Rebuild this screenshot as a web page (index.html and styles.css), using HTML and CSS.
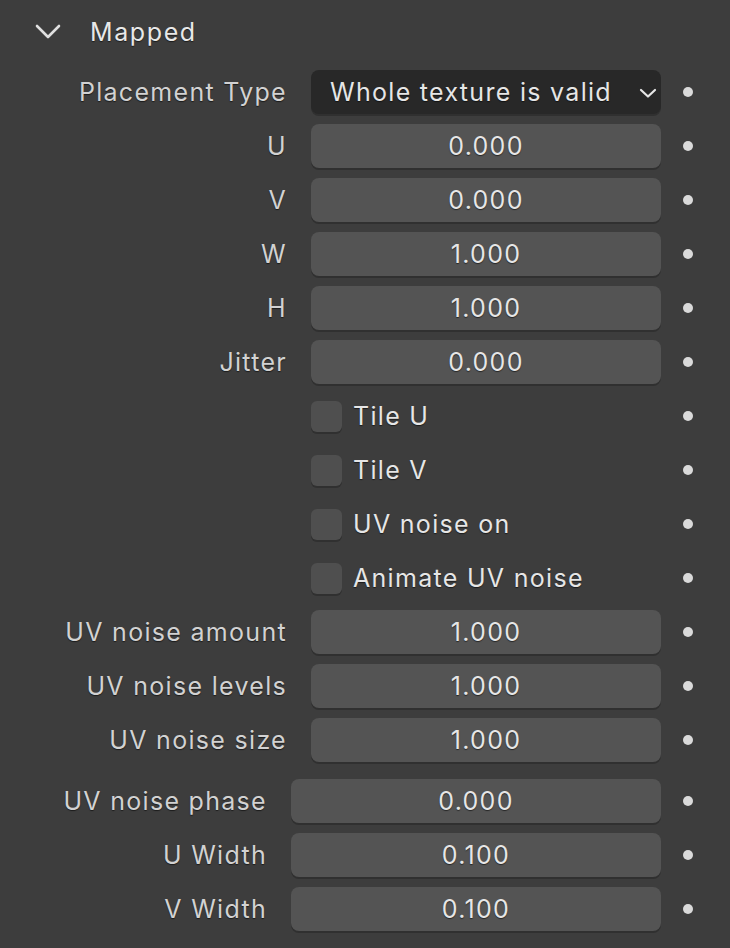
FILE: index.html
```html
<!DOCTYPE html>
<html>
<head>
<meta charset="utf-8">
<link rel="stylesheet" href="styles.css">
</head>
<body>
<div class="panel">
  <div class="header">
    <svg class="chev" width="26" height="16" viewBox="0 0 26 16"><path d="M2 2 L13 13 L24 2" fill="none" stroke="#e0e0e0" stroke-width="2.6" stroke-linecap="round" stroke-linejoin="round"/></svg>
    <span class="title">Mapped</span>
  </div>

  <div class="grid g1">
    <div class="label">Placement Type</div>
    <div class="field dropdown"><span>Whole texture is valid</span>
      <svg width="18" height="12" viewBox="0 0 18 12"><path d="M2 3 L9 9.5 L16 3" fill="none" stroke="#e6e6e6" stroke-width="2.2" stroke-linecap="round" stroke-linejoin="round"/></svg>
    </div>
    <div class="dot"></div>

    <div class="label">U</div><div class="field num">0.000</div><div class="dot"></div>
    <div class="label">V</div><div class="field num">0.000</div><div class="dot"></div>
    <div class="label">W</div><div class="field num">1.000</div><div class="dot"></div>
    <div class="label">H</div><div class="field num">1.000</div><div class="dot"></div>
    <div class="label">Jitter</div><div class="field num">0.000</div><div class="dot"></div>

    <div class="label"></div><div class="check"><span class="box"></span><span>Tile U</span></div><div class="dot"></div>
    <div class="label"></div><div class="check"><span class="box"></span><span>Tile V</span></div><div class="dot"></div>
    <div class="label"></div><div class="check"><span class="box"></span><span>UV noise on</span></div><div class="dot"></div>
    <div class="label"></div><div class="check"><span class="box"></span><span>Animate UV noise</span></div><div class="dot"></div>

    <div class="label">UV noise amount</div><div class="field num">1.000</div><div class="dot"></div>
    <div class="label">UV noise levels</div><div class="field num">1.000</div><div class="dot"></div>
    <div class="label">UV noise size</div><div class="field num">1.000</div><div class="dot"></div>
  </div>

  <div class="grid g2">
    <div class="label">UV noise phase</div><div class="field num">0.000</div><div class="dot"></div>
    <div class="label">U Width</div><div class="field num">0.100</div><div class="dot"></div>
    <div class="label">V Width</div><div class="field num">0.100</div><div class="dot"></div>
  </div>
</div>
</body>
</html>
```

FILE: styles.css
```css
html, body {
  margin: 0;
  padding: 0;
  background: #3d3d3d;
}
body {
  font-family: Inter, "Noto Sans", sans-serif;
  font-size: 25px;
  letter-spacing: 1.3px;
  color: #e6e6e6;
  width: 730px;
  height: 948px;
  overflow: hidden;
}
.panel {
  display: flex;
  flex-direction: column;
}
.header {
  height: 64px;
  display: flex;
  align-items: center;
  padding-left: 35px;
}
.chev {
  display: block;
  margin-right: 29px;
}
.title {
  font-size: 25px;
  letter-spacing: 1.6px;
  color: #e8e8e8;
  text-shadow: 0 1px 1px rgba(0,0,0,0.55);
}
.grid {
  display: grid;
  grid-auto-rows: 44px;
  row-gap: 10px;
  align-items: center;
}
.g1 {
  margin-top: 6px;
  grid-template-columns: 311px 350px 1fr;
}
.g2 {
  margin-top: 17px;
  grid-template-columns: 291px 370px 1fr;
}
.label {
  text-align: right;
  padding-right: 24px;
  color: #d2d2d2;
  text-shadow: 0 1px 1px rgba(0,0,0,0.55);
  white-space: nowrap;
}
.field {
  height: 44px;
  border-radius: 8px;
  background: #545454;
  box-shadow: 0 2px 0 #303030;
  display: flex;
  align-items: center;
  box-sizing: border-box;
  text-shadow: 0 1px 1px rgba(0,0,0,0.55);
}
.num {
  justify-content: center;
}
.dropdown {
  background: #282828;
  justify-content: space-between;
  padding-left: 19px;
  padding-right: 4px;
}
.dropdown svg {
  display: block;
  margin-top: 2px;
}
.check {
  display: flex;
  align-items: center;
  gap: 11px;
  text-shadow: 0 1px 1px rgba(0,0,0,0.55);
}
.box {
  width: 31px;
  height: 31px;
  border-radius: 6px;
  background: #4f4f4f;
  box-shadow: 0 2px 0 #303030;
  flex: none;
}
.dot {
  width: 10px;
  height: 10px;
  border-radius: 50%;
  background: #dadada;
  margin-left: 22px;
}
```
